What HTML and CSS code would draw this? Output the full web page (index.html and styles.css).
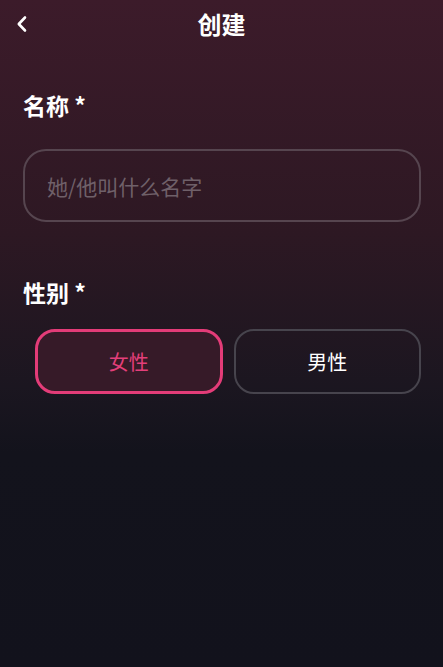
FILE: index.html
```html
<!DOCTYPE html>
<html lang="zh-CN">
<head>
  <meta charset="UTF-8" />
  <meta name="viewport" content="width=device-width, initial-scale=1.0" />
  <title>创建</title>
  <link rel="stylesheet" href="styles.css">
</head>
<body>
  <div class="page">
    <header class="topbar">
      <button class="back" aria-label="返回">
        <svg width="12" height="18" viewBox="0 0 12 18"><path d="M9 2.5 L2.8 9 L9 15.5" fill="none" stroke="#fff" stroke-width="2.6" stroke-linecap="round" stroke-linejoin="round"/></svg>
      </button>
      <h1>创建</h1>
      <span></span>
    </header>

    <div class="form">
      <label class="field-label" for="name">名称 *</label>
      <input class="text-input" id="name" type="text" placeholder="她/他叫什么名字" />

      <div class="field-label gender-label">性别 *</div>
      <div class="gender-row">
        <button class="gender active">女性</button>
        <button class="gender">男性</button>
      </div>
    </div>
  </div>
</body>
</html>
```

FILE: styles.css
```css
html, body { margin: 0; height: 100%; }
body {
  font-family: "Noto Sans CJK SC", "Noto Sans", sans-serif;
  color: #fff;
  background: linear-gradient(180deg, #3c1b2a 0%, #2d1823 35%, #1b1620 58%, #13131c 68%, #12121c 100%);
}
.page { min-height: 100%; }

.topbar { display: grid; grid-template-columns: 1fr auto 1fr; align-items: center; height: 48px; }
.back { justify-self: start; background: none; border: none; padding: 0 0 0 16px; height: 48px; display: flex; align-items: center; cursor: pointer; }
.topbar h1 { margin: 0; font-size: 24px; font-weight: 700; line-height: 48px; }

.form { padding: 42px 22px 0 23px; }
.field-label { display: block; font-size: 23px; font-weight: 700; line-height: 30px; }

.text-input {
  display: block; box-sizing: border-box; width: 100%; height: 73px; margin-top: 29px;
  padding: 0 22px; border: 2px solid #56454f; border-radius: 23px;
  background: transparent; color: #fff; font-family: inherit; font-size: 21px; outline: none;
}
.text-input::placeholder { color: #6f6069; }

.gender-label { margin-top: 55px; }
.gender-row { display: grid; grid-template-columns: 1fr 1fr; gap: 11px; margin-top: 22px; padding-left: 12px; }
.gender {
  box-sizing: border-box; height: 65px; border: 2px solid #47444d; border-radius: 20px;
  background: transparent; color: #fff; font-family: inherit; font-size: 20px; cursor: pointer;
}
.gender.active { border: 3px solid #e33c78; background: #361a28; color: #e33f7a; }
```
